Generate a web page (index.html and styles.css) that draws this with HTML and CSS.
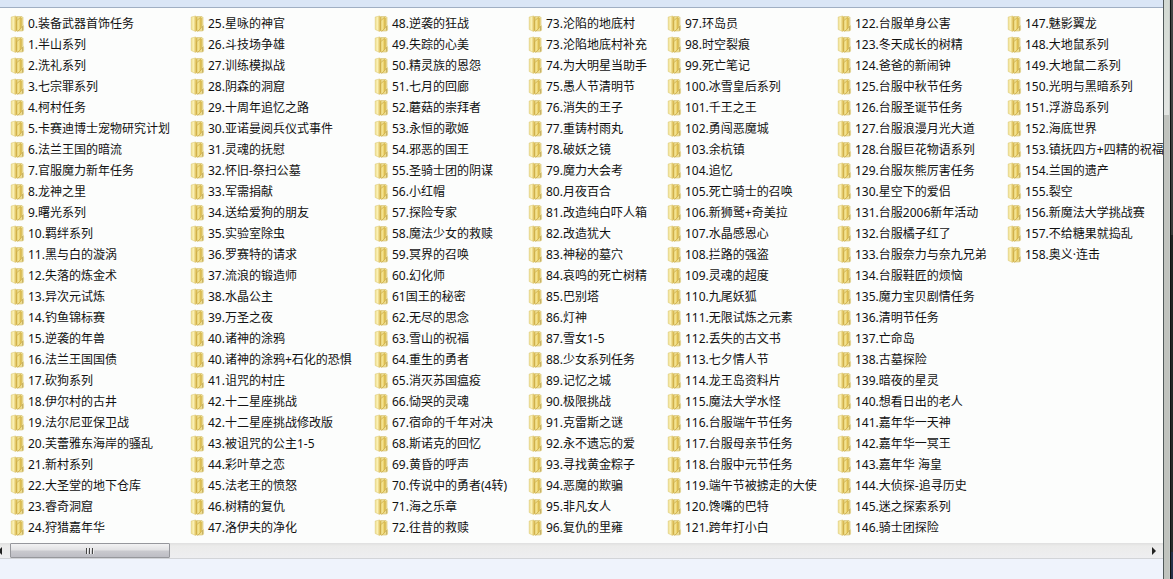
FILE: index.html
```html
<!DOCTYPE html>
<html lang="zh-CN">
<head>
    <meta charset="UTF-8">
    <title>任务列表</title>
    <link rel="stylesheet" href="styles.css">
</head>
<body>
    <div class="window">
        <main class="explorer">
            <div class="toolbar"></div>
            <ul class="files">
                <li>0.装备武器首饰任务</li>
                <li>1.半山系列</li>
                <li>2.洗礼系列</li>
                <li>3.七宗罪系列</li>
                <li>4.柯村任务</li>
                <li>5.卡赛迪博士宠物研究计划</li>
                <li>6.法兰王国的暗流</li>
                <li>7.官服魔力新年任务</li>
                <li>8.龙神之里</li>
                <li>9.曙光系列</li>
                <li>10.羁绊系列</li>
                <li>11.黑与白的漩涡</li>
                <li>12.失落的炼金术</li>
                <li>13.异次元试炼</li>
                <li>14.钓鱼锦标赛</li>
                <li>15.逆袭的年兽</li>
                <li>16.法兰王国国债</li>
                <li>17.砍狗系列</li>
                <li>18.伊尔村的古井</li>
                <li>19.法尔尼亚保卫战</li>
                <li>20.芙蕾雅东海岸的骚乱</li>
                <li>21.新村系列</li>
                <li>22.大圣堂的地下仓库</li>
                <li>23.睿奇洞窟</li>
                <li>24.狩猎嘉年华</li>

                <li>25.星咏的神官</li>
                <li>26.斗技场争雄</li>
                <li>27.训练模拟战</li>
                <li>28.阴森的洞窟</li>
                <li>29.十周年追忆之路</li>
                <li>30.亚诺曼阅兵仪式事件</li>
                <li>31.灵魂的抚慰</li>
                <li>32.怀旧-祭扫公墓</li>
                <li>33.军需捐献</li>
                <li>34.送给爱狗的朋友</li>
                <li>35.实验室除虫</li>
                <li>36.罗赛特的请求</li>
                <li>37.流浪的锻造师</li>
                <li>38.水晶公主</li>
                <li>39.万圣之夜</li>
                <li>40.诸神的涂鸦</li>
                <li>40.诸神的涂鸦+石化的恐惧</li>
                <li>41.诅咒的村庄</li>
                <li>42.十二星座挑战</li>
                <li>42.十二星座挑战修改版</li>
                <li>43.被诅咒的公主1-5</li>
                <li>44.彩叶草之恋</li>
                <li>45.法老王的愤怒</li>
                <li>46.树精的复仇</li>
                <li>47.洛伊夫的净化</li>

                <li>48.逆袭的狂战</li>
                <li>49.失踪的心美</li>
                <li>50.精灵族的恩怨</li>
                <li>51.七月的回廊</li>
                <li>52.蘑菇的崇拜者</li>
                <li>53.永恒的歌姬</li>
                <li>54.邪恶的国王</li>
                <li>55.圣骑士团的阴谋</li>
                <li>56.小红帽</li>
                <li>57.探险专家</li>
                <li>58.魔法少女的救赎</li>
                <li>59.冥界的召唤</li>
                <li>60.幻化师</li>
                <li>61国王的秘密</li>
                <li>62.无尽的思念</li>
                <li>63.雪山的祝福</li>
                <li>64.重生的勇者</li>
                <li>65.消灭苏国瘟疫</li>
                <li>66.恸哭的灵魂</li>
                <li>67.宿命的千年对决</li>
                <li>68.斯诺克的回忆</li>
                <li>69.黄昏的呼声</li>
                <li>70.传说中的勇者(4转)</li>
                <li>71.海之乐章</li>
                <li>72.往昔的救赎</li>

                <li>73.沦陷的地底村</li>
                <li>73.沦陷地底村补充</li>
                <li>74.为大明星当助手</li>
                <li>75.愚人节清明节</li>
                <li>76.消失的王子</li>
                <li>77.重铸村雨丸</li>
                <li>78.破妖之镜</li>
                <li>79.魔力大会考</li>
                <li>80.月夜百合</li>
                <li>81.改造纯白吓人箱</li>
                <li>82.改造犹大</li>
                <li>83.神秘的墓穴</li>
                <li>84.哀鸣的死亡树精</li>
                <li>85.巴别塔</li>
                <li>86.灯神</li>
                <li>87.雪女1-5</li>
                <li>88.少女系列任务</li>
                <li>89.记忆之城</li>
                <li>90.极限挑战</li>
                <li>91.克雷斯之谜</li>
                <li>92.永不遗忘的爱</li>
                <li>93.寻找黄金粽子</li>
                <li>94.恶魔的欺骗</li>
                <li>95.非凡女人</li>
                <li>96.复仇的里雍</li>

                <li>97.环岛员</li>
                <li>98.时空裂痕</li>
                <li>99.死亡笔记</li>
                <li>100.冰雪皇后系列</li>
                <li>101.千王之王</li>
                <li>102.勇闯恶魔城</li>
                <li>103.余杭镇</li>
                <li>104.追忆</li>
                <li>105.死亡骑士的召唤</li>
                <li>106.新狮鹫+奇美拉</li>
                <li>107.水晶感恩心</li>
                <li>108.拦路的强盗</li>
                <li>109.灵魂的超度</li>
                <li>110.九尾妖狐</li>
                <li>111.无限试炼之元素</li>
                <li>112.丢失的古文书</li>
                <li>113.七夕情人节</li>
                <li>114.龙王岛资料片</li>
                <li>115.魔法大学水怪</li>
                <li>116.台服端午节任务</li>
                <li>117.台服母亲节任务</li>
                <li>118.台服中元节任务</li>
                <li>119.端午节被掳走的大使</li>
                <li>120.馋嘴的巴特</li>
                <li>121.跨年打小白</li>

                <li>122.台服单身公害</li>
                <li>123.冬天成长的树精</li>
                <li>124.爸爸的新闹钟</li>
                <li>125.台服中秋节任务</li>
                <li>126.台服圣诞节任务</li>
                <li>127.台服浪漫月光大道</li>
                <li>128.台服巨花物语系列</li>
                <li>129.台服灰熊厉害任务</li>
                <li>130.星空下的爱侣</li>
                <li>131.台服2006新年活动</li>
                <li>132.台服橘子红了</li>
                <li>133.台服奈力与奈九兄弟</li>
                <li>134.台服鞋匠的烦恼</li>
                <li>135.魔力宝贝剧情任务</li>
                <li>136.清明节任务</li>
                <li>137.亡命岛</li>
                <li>138.古墓探险</li>
                <li>139.暗夜的星灵</li>
                <li>140.想看日出的老人</li>
                <li>141.嘉年华一天神</li>
                <li>142.嘉年华一冥王</li>
                <li>143.嘉年华 海皇</li>
                <li>144.大侦探-追寻历史</li>
                <li>145.迷之探索系列</li>
                <li>146.骑士团探险</li>

                <li>147.魅影翼龙</li>
                <li>148.大地鼠系列</li>
                <li>149.大地鼠二系列</li>
                <li>150.光明与黑暗系列</li>
                <li>151.浮游岛系列</li>
                <li>152.海底世界</li>
                <li>153.镇抚四方+四精的祝福</li>
                <li>154.兰国的遗产</li>
                <li>155.裂空</li>
                <li>156.新魔法大学挑战赛</li>
                <li>157.不给糖果就捣乱</li>
                <li>158.奥义·连击</li>
            </ul>
            <div class="scrollbar">
                <button class="arrow arrow-left" type="button" aria-label="向左滚动">
                    <svg width="4" height="8" viewBox="0 0 4 8"><path d="M4 0v8L0 4z"/></svg>
                </button>
                <div class="track">
                    <div class="thumb"><i></i><i></i><i></i></div>
                </div>
                <button class="arrow arrow-right" type="button" aria-label="向右滚动">
                    <svg width="4" height="8" viewBox="0 0 4 8"><path d="M0 0v8l4-4z"/></svg>
                </button>
            </div>
            <div class="details"></div>
        </main>
        <div class="frame"></div>
        <div class="desktop"></div>
    </div>
</body>
</html>
```
FILE: styles.css
```css
* {
    box-sizing: border-box;
}

body {
    margin: 0;
    font-family: "Noto Sans", "Noto Sans CJK SC", sans-serif;
    font-size: 12px;
    color: #111;
}

.window {
    display: flex;
    min-height: 100vh;
}

.explorer {
    flex: 1;
    min-width: 0;
    display: flex;
    flex-direction: column;
    background-color: #fcfdfc;
}

.toolbar {
    height: 8px;
    background-color: #dae6f6;
    border-bottom: 1px solid #a0afc3;
}

/* 文件夹列表，每列 25 个 */
.files {
    display: grid;
    grid-auto-flow: column;
    grid-template-rows: repeat(25, 21px);
    grid-template-columns: 160px 164px 134px 119px 150px 150px max-content;
    column-gap: 20px;
    margin: 0;
    padding: 5px 0 5px 10px;
    list-style: none;
    overflow: hidden;
}

.files li {
    padding-left: 18px;
    line-height: 21px;
    white-space: nowrap;
    background: url("data:image/svg+xml,%3Csvg xmlns='http://www.w3.org/2000/svg' width='16' height='17' viewBox='0 0 16 17'%3E%3Cdefs%3E%3ClinearGradient id='a'%3E%3Cstop offset='0' stop-color='%23f0e090'/%3E%3Cstop offset='.4' stop-color='%23faf0b4'/%3E%3Cstop offset='1' stop-color='%23d2ac38'/%3E%3C/linearGradient%3E%3ClinearGradient id='b'%3E%3Cstop offset='0' stop-color='%23fff8b4'/%3E%3Cstop offset='1' stop-color='%23e0bc48'/%3E%3C/linearGradient%3E%3C/defs%3E%3Cpath d='M7 1.500h5l1 1V10l.6 1v4l-1 1H7z' fill='%23efdf92' stroke='%23d4c070' stroke-width='.6'/%3E%3Cpath d='M1.200 2L5.500 1 7 2v13.500L5.500 16.500l-4.300-2z' fill='url(%23a)' stroke='%23d8c470' stroke-width='.5'/%3E%3Cpath d='M7 5.500L10.300 2.500l.9.6V13L7.800 16.200 7 15.600z' fill='url(%23b)' stroke='%23c09c34' stroke-width='.6'/%3E%3Cpath d='M12.500 11v4.500' stroke='%23bda65c' stroke-width='.8'/%3E%3C/svg%3E") no-repeat 0 2px;
}

.scrollbar {
    display: flex;
    height: 16px;
    background: linear-gradient(#dfdfdf, #ebebea 3px, #eeeef0);
    border-bottom: 1px solid #d2d4d8;
}

.arrow {
    display: flex;
    align-items: center;
    padding: 0;
    border: 0;
    background: none;
    fill: #222;
}

.arrow-left {
    width: 10px;
    overflow: hidden;
}

.arrow-left svg {
    margin-left: -2px;
}

.arrow-right {
    width: 11px;
}

.track {
    flex: 1;
}

.thumb {
    display: flex;
    align-items: center;
    justify-content: center;
    gap: 1px;
    width: 14%;
    height: 15px;
    border: 1px solid #96979c;
    border-radius: 1px;
    background: linear-gradient(#f2f2f3, #e2e2e4 45%, #c9c9ce 55%, #bdbdc4);
}

.thumb i {
    width: 2px;
    height: 6px;
    border-left: 1px solid #444;
    background-color: #eee;
}

.details {
    flex: 1;
    min-height: 20px;
    background-color: #eff3fc;
}

/* 右侧窗口边框 */
.frame {
    width: 7px;
    border-left: 1px solid #50595a;
    border-right: 1px solid #c6cbc8;
    background: linear-gradient(#d2d9d2, #e2e5e2 115px, #c0c3be 115px);
}

.desktop {
    width: 3px;
    border-left: 1px solid #101312;
    background: linear-gradient(#454746, #383a39 235px, #1f2221 235px, #2a2c2b 552px, #26334a 552px);
}
```
